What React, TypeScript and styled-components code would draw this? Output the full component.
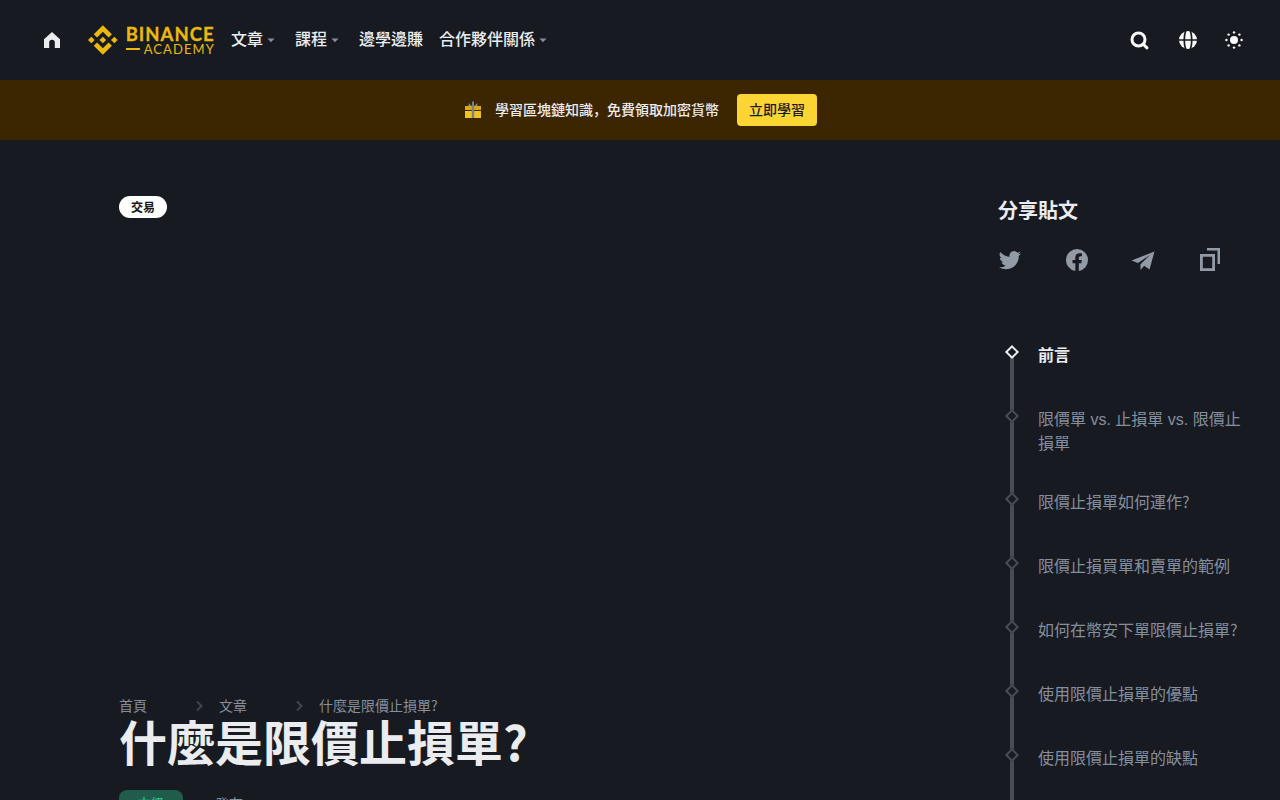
import React from "react";
import styled, { createGlobalStyle } from "styled-components";

const Global = createGlobalStyle`
  html, body { margin: 0; padding: 0; height: 800px; overflow: hidden; background: #181a21; }
  body { font-family: "Liberation Sans", "Noto Sans CJK JP", sans-serif; }
  * { box-sizing: border-box; }
`;

const Page = styled.div`
  width: 1280px;
  height: 800px;
  overflow: hidden;
  background: #181a21;
  display: flex;
  flex-direction: column;
`;

const Header = styled.header`
  height: 80px;
  flex: none;
  display: flex;
  align-items: center;
  padding: 0 24px 0 32px;
`;

const IconButton = styled.button`
  width: 40px;
  height: 40px;
  padding: 0;
  border: 0;
  background: none;
  display: flex;
  align-items: center;
  justify-content: center;
  flex: none;
`;

const LogoLink = styled.a`
  display: flex;
  width: 127px;
  height: 32px;
  margin-left: 16px;
  align-items: center;
  gap: 7px;
  flex: none;
`;

const LogoWords = styled.div`
  display: flex;
  flex-direction: column;
  margin-left: 1px;
  font-family: Lato, sans-serif;
  color: #eab90f;
`;

const LogoTop = styled.span`
  font-size: 18.5px;
  line-height: 18px;
  font-weight: 700;
  letter-spacing: 1px;
  white-space: nowrap;
  -webkit-text-stroke: 0.3px #eab90f;
`;

const LogoBottom = styled.span`
  display: flex;
  align-items: center;
  gap: 4px;
  font-size: 13px;
  line-height: 12px;
  letter-spacing: 1.1px;
  font-weight: 400;
  white-space: nowrap;
`;

const LogoDash = styled.i`
  display: block;
  width: 14px;
  height: 2px;
  background: #eab90f;
`;

const Nav = styled.nav`
  display: flex;
  align-items: center;
  gap: 16px;
  margin-left: 16px;
`;

const NavItem = styled.a`
  display: flex;
  align-items: center;
  color: #eaecef;
  font-size: 16px;
  font-weight: 500;
  line-height: 24px;
`;

const Spacer = styled.div`
  flex: 1;
`;

const HeaderActions = styled.div`
  display: flex;
  align-items: center;
  gap: 8px;
`;

const Banner = styled.div`
  height: 60px;
  flex: none;
  background: #3c2601;
  display: flex;
  align-items: center;
  justify-content: center;
`;

const BannerText = styled.span`
  margin: 0 18px 0 12px;
  color: #eaecef;
  font-size: 14px;
  font-weight: 500;
  line-height: 20px;
`;

const BannerButton = styled.button`
  width: 80px;
  height: 32px;
  border: 0;
  padding: 0 0 2px;
  border-radius: 4px;
  background: #fcd535;
  color: #181a20;
  font: inherit;
  font-size: 14px;
  font-weight: 500;
`;

const Body = styled.div`
  flex: 1;
  display: flex;
  min-height: 0;
`;

const Main = styled.main`
  width: 998px;
  flex: none;
  padding: 56px 0 0 119px;
`;

const Tag = styled.span`
  display: inline-flex;
  align-items: center;
  justify-content: center;
  width: 48px;
  height: 22px;
  padding-bottom: 2px;
  border-radius: 11px;
  background: #fff;
  color: #181a20;
  font-size: 12px;
  font-weight: 700;
`;

const Hero = styled.div`
  height: 478px;
`;

const Crumbs = styled.div`
  display: flex;
  align-items: center;
  height: 20px;
  color: #848e9c;
  font-size: 14px;
  line-height: 20px;
`;

const Crumb = styled.span<{ $wide?: boolean }>`
  width: ${(p) => (p.$wide ? "auto" : "28px")};
`;

const CrumbArrow = styled.span`
  width: 40px;
  margin-left: 32px;
  display: flex;
  justify-content: center;
`;

const Title = styled.h1`
  margin: 1px 0 0;
  color: #eaecef;
  font-size: 48px;
  line-height: 56px;
  font-weight: 700;
  white-space: nowrap;
`;

const QMark = styled.span`
  font-family: "Noto Sans CJK JP", sans-serif;
  line-height: 0;
`;

const Meta = styled.div`
  display: flex;
  align-items: flex-start;
  gap: 32px;
  margin-top: 17px;
`;

const Level = styled.span`
  width: 64px;
  height: 28px;
  border-radius: 8px;
  background: #1f5c4b;
  color: #2ebd85;
  font-size: 14px;
  line-height: 28px;
  font-weight: 500;
  text-align: center;
`;

const MetaText = styled.span`
  color: #848e9c;
  font-size: 14px;
  line-height: 28px;
`;

const Aside = styled.aside`
  width: 282px;
  flex: none;
  padding-top: 57px;
`;

const ShareTitle = styled.h2`
  margin: 0;
  color: #eaecef;
  font-size: 20px;
  line-height: 28px;
  font-weight: 600;
`;

const ShareRow = styled.div`
  display: flex;
  justify-content: space-between;
  width: 224px;
  margin-top: 23px;
  height: 24px;
`;

const ShareIcon = styled.svg`
  width: 24px;
  height: 24px;
  flex: none;
  fill: #929aa5;
`;

const Toc = styled.ul`
  list-style: none;
  margin: 72px 0 0;
  padding: 0 0 0 40px;
  width: 246px;
`;

const TocItem = styled.li<{ $active?: boolean }>`
  position: relative;
  padding-bottom: 16px;
  margin-bottom: 24px;
  color: ${(p) => (p.$active ? "#eaecef" : "#848e9c")};
  font-size: 16px;
  line-height: 24px;
  font-weight: ${(p) => (p.$active ? 600 : 400)};
  &:nth-child(2) {
    margin-bottom: 19px;
  }
  &::before {
    content: "";
    position: absolute;
    left: -28px;
    top: 7px;
    bottom: -32px;
    width: 4px;
    background: #474d57;
  }
  &::after {
    content: "";
    box-sizing: border-box;
    position: absolute;
    left: -31px;
    top: 3px;
    width: 10px;
    height: 10px;
    transform: rotate(45deg);
    background: #181a21;
    border: 2px solid ${(p) => (p.$active ? "#eaecef" : "#474d57")};
  }
`;

const Home = () => (
  <svg width="24" height="24" viewBox="0 0 24 24" fill="#eaecef">
    <path d="M12 4l8 7.200V20h-5.200v-5.400a2.800 2.800 0 0 0-5.600 0V20H4v-8.800z" />
  </svg>
);

const Logo = () => (
  <svg width="32" height="32" viewBox="0 0 32 32" fill="#eab90f">
    <path d="M9.800 13.400 16 7.200l6.200 6.200 3.600-3.600L16 0 6.200 9.800zM0 16l3.600-3.600L7.200 16l-3.600 3.600zM9.800 18.600 16 24.800l6.200-6.200 3.600 3.600L16 32l-9.800-9.800zM24.800 16l3.600-3.600L32 16l-3.600 3.600zM19.600 16 16 12.400 12.400 16 16 19.600z" />
  </svg>
);

const Caret = () => (
  <svg width="16" height="16" viewBox="0 0 16 16" fill="#848e9c">
    <path d="M4.500 6.500h7L8 10.300z" />
  </svg>
);

const Search = () => (
  <svg width="24" height="24" viewBox="0 0 24 24" fill="none" stroke="#fafafa" strokeWidth="3">
    <circle cx="10.500" cy="11.500" r="6.500" />
    <path d="M15.500 16.500l3.500 3.300" strokeLinecap="round" />
  </svg>
);

const Globe = () => (
  <svg width="24" height="24" viewBox="0 0 24 24">
    <circle cx="12" cy="12" r="9" fill="#fafafa" />
    <path d="M3 12h18M9.600 3C7.800 8 7.800 16 9.600 21M14.400 3c1.800 5 1.800 13 0 18" fill="none" stroke="#181a21" strokeWidth="1.700" />
  </svg>
);

const Sun = () => (
  <svg width="24" height="24" viewBox="0 0 24 24" fill="#fafafa">
    <circle cx="10" cy="12" r="4" />
    {[[10, 4.400], [10, 19.600], [2.400, 12], [17.600, 12], [4.600, 6.600], [15.400, 6.600], [4.600, 17.400], [15.400, 17.400]].map(([x, y]) => (
      <circle key={`${x}-${y}`} cx={x} cy={y} r="1.200" />
    ))}
  </svg>
);

const Gift = () => (
  <svg width="20" height="20" viewBox="0 0 20 20">
    <path d="M9 1.500h2v4.500H9zM5.500 3L9 6h2l3.500-3v3h-9z" fill="#76808f" />
    <path d="M2 6h16v4H2z" fill="#d9a90f" />
    <path d="M2 11h16v7H2z" fill="#f0c420" />
    <path d="M8.800 6h2.400v12H8.800z" fill="#76808f" />
  </svg>
);

const Chevron = () => (
  <svg width="16" height="16" viewBox="0 0 16 16" fill="none" stroke="#3f444d" strokeWidth="2">
    <path d="M6 3.500L10.500 8 6 12.500" />
  </svg>
);

const toc: React.ReactNode[] = [
  "前言",
  "限價單 vs. 止損單 vs. 限價止損單",
  <React.Fragment key="a">限價止損單如何運作<QMark>?</QMark></React.Fragment>,
  "限價止損買單和賣單的範例",
  <React.Fragment key="b">如何在幣安下單限價止損單<QMark>?</QMark></React.Fragment>,
  "使用限價止損單的優點",
  "使用限價止損單的缺點",
  "總結",
];

export default function App() {
  return (
    <Page>
      <Global />
      <Header>
        <IconButton><Home /></IconButton>
        <LogoLink>
          <Logo />
          <LogoWords>
            <LogoTop>BINANCE</LogoTop>
            <LogoBottom><LogoDash />ACADEMY</LogoBottom>
          </LogoWords>
        </LogoLink>
        <Nav>
          <NavItem>文章<Caret /></NavItem>
          <NavItem>課程<Caret /></NavItem>
          <NavItem>邊學邊賺</NavItem>
          <NavItem>合作夥伴關係<Caret /></NavItem>
        </Nav>
        <Spacer />
        <HeaderActions>
          <IconButton><Search /></IconButton>
          <IconButton><Globe /></IconButton>
          <IconButton><Sun /></IconButton>
        </HeaderActions>
      </Header>
      <Banner>
        <Gift />
        <BannerText>學習區塊鏈知識，免費領取加密貨幣</BannerText>
        <BannerButton>立即學習</BannerButton>
      </Banner>
      <Body>
        <Main>
          <Tag>交易</Tag>
          <Hero />
          <Crumbs>
            <Crumb>首頁</Crumb>
            <CrumbArrow><Chevron /></CrumbArrow>
            <Crumb>文章</Crumb>
            <CrumbArrow><Chevron /></CrumbArrow>
            <Crumb $wide>什麼是限價止損單<QMark>?</QMark></Crumb>
          </Crumbs>
          <Title>什麼是限價止損單<QMark>?</QMark></Title>
          <Meta>
            <Level>中級</Level>
            <MetaText>發布</MetaText>
          </Meta>
        </Main>
        <Aside>
          <ShareTitle>分享貼文</ShareTitle>
          <ShareRow>
            <ShareIcon viewBox="0 0 24 24">
              <path d="M23 5.400c-.8.4-1.700.6-2.600.7.9-.6 1.600-1.400 2-2.500-.9.5-1.900.9-2.900 1.100a4.500 4.500 0 0 0-7.800 4.100C7.900 8.600 4.600 6.800 2.400 4.100a4.500 4.500 0 0 0 1.400 6.100c-.7 0-1.400-.2-2-.6 0 2.200 1.500 4.100 3.700 4.500-.7.2-1.400.2-2 .1.6 1.800 2.300 3.100 4.300 3.200A9.100 9.100 0 0 1 1 19.200 12.900 12.900 0 0 0 8 21.200c8.400 0 13.100-7.100 12.800-13.500.9-.6 1.600-1.400 2.200-2.300z" />
            </ShareIcon>
            <ShareIcon viewBox="0 0 24 24">
              <path d="M23 12a11 11 0 1 0-12.700 10.900v-7.700H7.500V12h2.800V9.600c0-2.800 1.600-4.300 4.200-4.300 1.200 0 2.500.2 2.500.2v2.700h-1.400c-1.400 0-1.800.9-1.800 1.700V12h3l-.5 3.200h-2.500v7.700A11 11 0 0 0 23 12z" />
            </ShareIcon>
            <ShareIcon viewBox="0 0 24 24">
              <path d="M23.500 3.500L.5 12.500l6.500 2.500L19 7l-9.500 9.200v5.800l3.700-4.300 5.300 3.800z" />
            </ShareIcon>
            <ShareIcon viewBox="0 0 24 24">
              <path d="M9 0h13v16h-2.500V2.500H9zM2 6h15v17H2zm2.800 2.800v11.400h9.400V8.800z" fillRule="evenodd" />
            </ShareIcon>
          </ShareRow>
          <Toc>
            {toc.map((t, i) => (
              <TocItem key={i} $active={i === 0}>{t}</TocItem>
            ))}
          </Toc>
        </Aside>
      </Body>
    </Page>
  );
}
